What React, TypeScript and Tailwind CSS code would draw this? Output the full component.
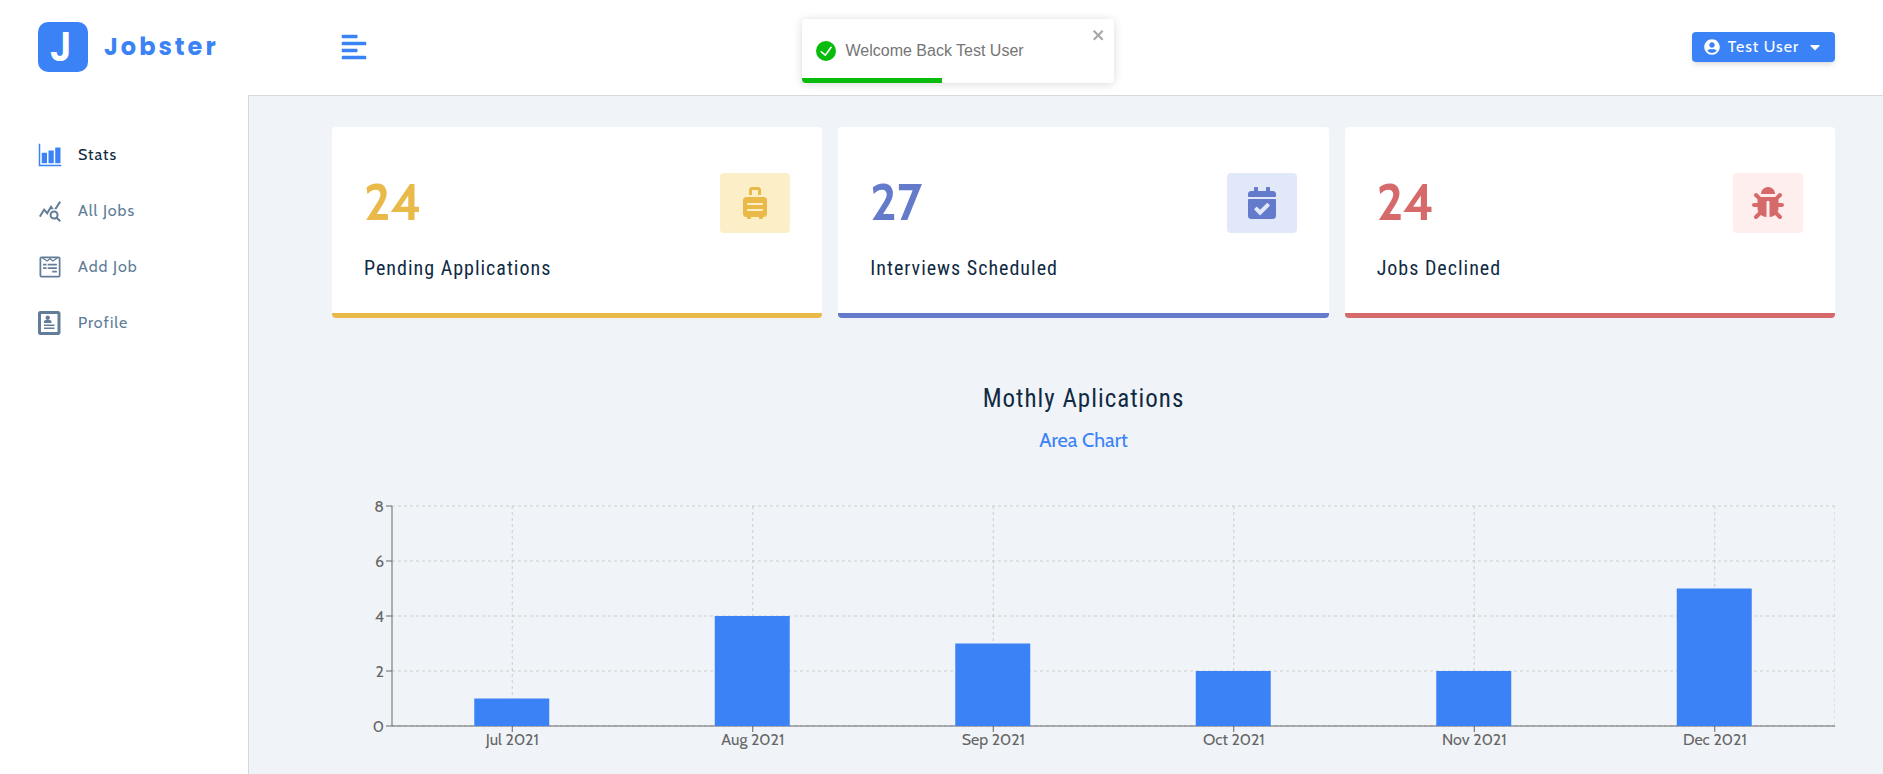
import { useLayoutEffect, useRef, useState } from 'react';
import type { ComponentType } from 'react';
import {
  FaAlignLeft,
  FaBug,
  FaCalendarCheck,
  FaCaretDown,
  FaSuitcaseRolling,
  FaUserCircle,
  FaWpforms,
} from 'react-icons/fa';
import { IoBarChartSharp } from 'react-icons/io5';
import { MdQueryStats } from 'react-icons/md';
import { ImProfile } from 'react-icons/im';

type Icon = ComponentType<{ className?: string }>;

const links: { text: string; icon: Icon; active?: boolean }[] = [
  { text: 'Stats', icon: IoBarChartSharp, active: true },
  { text: 'All Jobs', icon: MdQueryStats },
  { text: 'Add Job', icon: FaWpforms },
  { text: 'Profile', icon: ImProfile },
];

const stats: { title: string; count: number; icon: Icon; border: string; color: string; tint: string }[] = [
  {
    title: 'Pending Applications',
    count: 24,
    icon: FaSuitcaseRolling,
    border: 'border-[#e9b949]',
    color: 'text-[#e9b949]',
    tint: 'bg-[#fcefc7]',
  },
  {
    title: 'Interviews Scheduled',
    count: 27,
    icon: FaCalendarCheck,
    border: 'border-[#647acb]',
    color: 'text-[#647acb]',
    tint: 'bg-[#e0e8f9]',
  },
  {
    title: 'Jobs Declined',
    count: 24,
    icon: FaBug,
    border: 'border-[#d66a6a]',
    color: 'text-[#d66a6a]',
    tint: 'bg-[#ffeeee]',
  },
];

const months = [
  { date: 'Jul 2021', count: 1 },
  { date: 'Aug 2021', count: 4 },
  { date: 'Sep 2021', count: 3 },
  { date: 'Oct 2021', count: 2 },
  { date: 'Nov 2021', count: 2 },
  { date: 'Dec 2021', count: 5 },
];

function Logo() {
  return (
    <a href="#home" className="flex items-center gap-4 font-['Poppins','Inter',sans-serif] text-[#3b82f6]">
      <span className="flex size-[50px] items-center justify-center rounded-[10px] bg-[#3b82f6] pr-1 text-[40px] leading-none font-semibold text-white">
        J
      </span>
      <span className="text-2xl font-bold tracking-[3px]">Jobster</span>
    </a>
  );
}

function Toast() {
  return (
    <div className="pointer-events-none absolute inset-x-0 top-[19px] flex justify-center pl-8">
      <div
        role="alert"
        className="pointer-events-auto relative flex h-16 w-[312px] items-center gap-[10px] overflow-hidden rounded bg-white px-[14px] font-['Liberation_Sans',sans-serif] text-base text-[#757575] shadow-[0_1px_10px_rgba(0,0,0,0.15)]"
      >
        <svg viewBox="0 0 24 24" className="size-5 fill-[#07bc0c]" aria-hidden="true">
          <path d="M12 0a12 12 0 1012 12A12.014 12.014 0 0012 0zm6.927 8.2l-6.845 9.289a1.011 1.011 0 01-1.43.188l-4.888-3.908a1 1 0 111.25-1.562l4.076 3.261 6.227-8.451a1 1 0 111.61 1.183z" />
        </svg>
        <span>Welcome Back Test User</span>
        <button type="button" aria-label="close" className="absolute top-2 right-2 text-[#a6a6a6]">
          <svg viewBox="0 0 14 16" className="h-4 w-[14px] fill-current" aria-hidden="true">
            <path
              fillRule="evenodd"
              d="M7.71 8.23l3.75 3.75-1.48 1.48-3.75-3.75-3.75 3.75L1 11.98l3.75-3.75L1 4.48 2.48 3l3.75 3.75L9.98 3l1.48 1.48-3.75 3.75z"
            />
          </svg>
        </button>
        <div className="absolute bottom-0 left-0 h-[5px] w-[45%] bg-[#07bc0c]" />
      </div>
    </div>
  );
}

function BarChart() {
  const box = useRef<HTMLDivElement>(null);
  const [width, setWidth] = useState(1503);

  useLayoutEffect(() => {
    const el = box.current;
    if (!el) return;
    const measure = () => setWidth(el.clientWidth);
    measure();
    const observer = new ResizeObserver(measure);
    observer.observe(el);
    return () => observer.disconnect();
  }, []);

  const left = 60;
  const top = 50;
  const bottom = 270;
  const band = (width - left) / months.length;
  const y = (value: number) => bottom - (value / 8) * (bottom - top);
  const center = (index: number) => left + band * (index + 0.5);

  return (
    <div ref={box} className="w-full">
      <svg width={width} height={300} className="block" role="img" aria-label="Monthly applications">
        <g stroke="#ccc" strokeDasharray="3 3">
          {[0, 2, 4, 6, 8].map((v) => (
            <line key={v} x1={left} x2={width} y1={y(v)} y2={y(v)} />
          ))}
          {months.map((m, i) => (
            <line key={m.date} x1={center(i)} x2={center(i)} y1={top} y2={bottom} />
          ))}
          <line x1={width} x2={width} y1={top} y2={bottom} />
        </g>
        <g stroke="#666">
          <line x1={left} x2={width} y1={bottom} y2={bottom} />
          <line x1={left} x2={left} y1={top} y2={bottom} />
          {[0, 2, 4, 6, 8].map((v) => (
            <line key={v} x1={left - 6} x2={left} y1={y(v)} y2={y(v)} />
          ))}
          {months.map((m, i) => (
            <line key={m.date} x1={center(i)} x2={center(i)} y1={bottom} y2={bottom + 6} />
          ))}
        </g>
        {months.map((m, i) => (
          <rect
            key={m.date}
            x={left + band * i + (band - 75) / 2 - 0.5}
            y={y(m.count)}
            width={75}
            height={bottom - y(m.count)}
            fill="#3b82f6"
          />
        ))}
        <g fill="#666" className="text-base">
          {[0, 2, 4, 6, 8].map((v) => (
            <text key={v} x={left - 8} y={y(v) + 6} textAnchor="end">
              {v}
            </text>
          ))}
          {months.map((m, i) => (
            <text key={m.date} x={center(i)} y={bottom + 19} textAnchor="middle">
              {m.date}
            </text>
          ))}
        </g>
      </svg>
    </div>
  );
}

export default function App() {
  return (
    <div className="relative flex min-h-screen flex-col bg-[#f0f4f8] font-['Cabin','Lato',sans-serif] text-[#102a43]">
      <header className="flex h-24 bg-white">
        <div className="flex w-[248px] shrink-0 items-center pl-[38px] pb-[2px]">
          <Logo />
        </div>
        <div className="flex flex-1 items-center justify-between border-b border-[#d5d9de] pr-12 pb-[2px] pl-[84px]">
          <button type="button" aria-label="Toggle sidebar" className="px-2 text-[#3b82f6]">
            <FaAlignLeft className="size-7" />
          </button>
          <button
            type="button"
            className="flex h-[30px] items-center gap-2 rounded bg-[#3b82f6] px-3 text-base tracking-[1px] text-white shadow-md"
          >
            <FaUserCircle className="size-4" />
            Test User
            <FaCaretDown className="size-4" />
          </button>
        </div>
      </header>
      <div className="flex flex-1">
        <aside className="w-[249px] shrink-0 border-r border-[#d5d9de] bg-white pt-[31px]">
          <nav className="flex flex-col">
            {links.map(({ text, icon: LinkIcon, active }) => (
              <a
                key={text}
                href={'#' + text.toLowerCase().replace(' ', '-')}
                className={
                  active
                    ? 'flex items-center gap-4 py-4 pl-[38px] text-base tracking-[1px] text-[#102a43]'
                    : 'flex items-center gap-4 py-4 pl-[38px] text-base tracking-[1px] text-[#627d98]'
                }
              >
                <LinkIcon className={active ? 'size-6 text-[#3b82f6]' : 'size-6'} />
                {text}
              </a>
            ))}
          </nav>
        </aside>
        <main className="min-w-0 flex-1 pt-[31px] pr-12 pl-[83px]">
          <section className="grid grid-cols-3 gap-4">
            {stats.map(({ title, count, icon: StatIcon, border, color, tint }) => (
              <article key={title} className={`rounded border-b-[5px] bg-white p-8 ${border}`}>
                <div className="flex h-[88px] items-center justify-between">
                  <span className={`text-[50px] leading-[90px] font-bold ${color}`}>{count}</span>
                  <span className={`flex h-[60px] w-[70px] items-center justify-center rounded ${tint} ${color}`}>
                    <StatIcon className="size-8" />
                  </span>
                </div>
                <h5 className="mt-2 font-['Roboto_Condensed','Liberation_Sans_Narrow','Roboto',sans-serif] text-xl leading-[26px] tracking-[1px]">
                  {title}
                </h5>
              </article>
            ))}
          </section>
          <section className="mt-16 flex flex-col items-center">
            <h4 className="font-['Roboto_Condensed','Liberation_Sans_Narrow','Roboto',sans-serif] text-[25px] leading-[34px] tracking-[1px]">
              Mothly Aplications
            </h4>
            <button type="button" className="mt-[10px] mb-[2px] text-xl leading-7 text-[#3b82f6]">
              Area Chart
            </button>
            <BarChart />
          </section>
        </main>
      </div>
      <Toast />
    </div>
  );
}
